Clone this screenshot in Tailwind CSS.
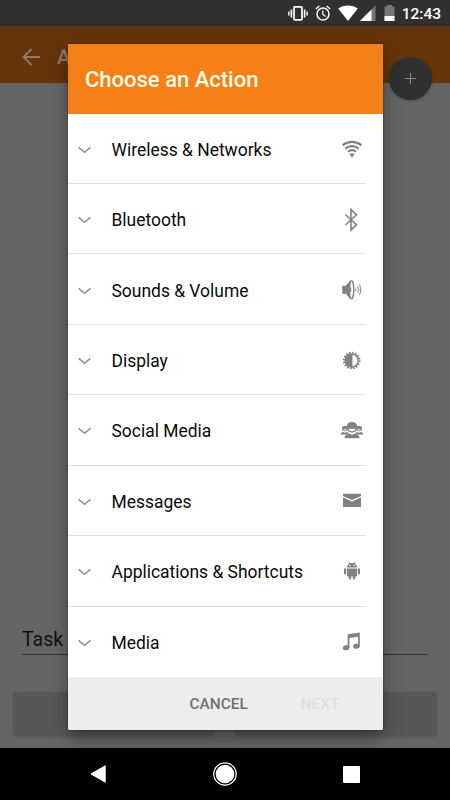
<!DOCTYPE html>
<html lang="en">

<head>
    <meta charset="UTF-8">
    <meta name="viewport" content="width=device-width, initial-scale=1.0">
    <title>Choose an Action</title>
    <script src="https://cdn.jsdelivr.net/npm/@tailwindcss/browser@4"></script>
</head>

<body class="bg-black font-[Roboto,sans-serif]">
    <div class="relative w-[450px] h-[800px] flex flex-col overflow-hidden bg-[#656565]">

        <!-- Status bar -->
        <header class="h-[26px] shrink-0 bg-[#303030] flex items-center justify-end pr-[9px] text-white">
            <svg class="w-5 h-[18px] mr-[7px]" viewBox="0 0 20 18" fill="none" stroke="white">
                <rect x="6" y="2.8" width="8" height="13" rx="1" stroke-width="1.7" />
                <path d="M3.4 5.500v8M16.6 5.500v8" stroke-width="1.6" />
                <path d="M.9 7.500v4M19.1 7.500v4" stroke-width="1.4" />
            </svg>
            <svg class="w-4 h-[18px] mr-[7px]" viewBox="0 0 16 18" fill="none" stroke="white">
                <circle cx="8" cy="10" r="6" stroke-width="1.500" />
                <path d="M.8 5 4.300 2M15.200 5 11.700 2" stroke-width="1.500" />
                <path d="M7.800 6.500v4l3 1.900" stroke-width="1.200" />
            </svg>
            <svg class="w-[20px] h-[18px] mr-[2px]" viewBox="0 0 20 18" fill="white">
                <path d="M.2 4.500C5.500.6 14.500.6 19.800 4.500L10 17z" />
            </svg>
            <svg class="w-4 h-[18px] mr-[8px]" viewBox="0 0 16 18">
                <path d="M0 17 15.500 1.500V17z" fill="#777" />
                <path d="M0 17 11.500 5.500V17z" fill="white" />
            </svg>
            <svg class="w-[11px] h-[18px] mr-[7px]" viewBox="0 0 11 18">
                <path d="M.5 2.500H3V1h5v1.500h2.500V17H.5z" fill="#777" />
                <path d="M.5 12h10v5H.5z" fill="white" />
            </svg>
            <span class="text-[15.500px] leading-none font-medium pt-[3px]">12:43</span>
        </header>

        <!-- App bar -->
        <div class="h-[57px] shrink-0 bg-[#66340a] flex items-center pl-[22px] pt-[4px] text-[#8f7a68]">
            <svg class="w-[19px] h-[18px]" viewBox="0 0 19 18" fill="none" stroke="currentColor" stroke-width="1.8">
                <path d="M18 9H2M9.500 1 1.500 9l8 8" />
            </svg>
            <span class="ml-4 text-[20px] font-medium">A</span>
        </div>

        <!-- Dimmed form -->
        <main class="grow flex flex-col justify-end px-[13px] pb-3">
            <div class="mx-[9px] mb-[37px] h-[30px] border-b border-[#333] text-[19.500px] leading-[30px] text-[#111]">Task</div>
            <div class="flex justify-between">
                <div class="w-[201px] h-[44px] rounded-sm bg-[#575757] shadow-sm"></div>
                <div class="w-[202px] h-[44px] rounded-sm bg-[#575757] shadow-sm"></div>
            </div>
        </main>

        <div class="absolute left-[389px] top-[57px] size-[43px] rounded-full bg-[#303030] shadow-sm shadow-black/20 flex items-center justify-center">
            <svg class="size-[11px]" viewBox="0 0 11 11" stroke="#858585" stroke-width="1.1">
                <path d="M5.500 0v11M0 5.500h11" />
            </svg>
        </div>

        <!-- Navigation bar -->
        <nav class="h-[52px] shrink-0 bg-black flex items-center justify-center gap-[107px]">
            <svg class="w-4 h-[18px]" viewBox="0 0 16 18" fill="white" stroke="white" stroke-linejoin="round">
                <path d="M1 9 15.200.8v16.400z" />
            </svg>
            <svg class="size-6" viewBox="0 0 24 24">
                <circle cx="12" cy="12" r="11.200" fill="none" stroke="white" stroke-width="1.200" />
                <circle cx="12" cy="12" r="9.300" fill="white" />
            </svg>
            <div class="size-[17px] -ml-px rounded-[1px] bg-white"></div>
        </nav>

        <!-- Dialog -->
        <section class="absolute left-[67.5px] top-[44px] w-[315px] h-[685.5px] rounded-xs overflow-hidden bg-white flex flex-col shadow-[0_8px_18px_0_rgba(0,0,0,0.35),0_0_2px_rgba(0,0,0,0.5)]">
            <h1 class="h-[69.5px] shrink-0 bg-[#f58017] pl-[17.500px] pt-[2px] flex items-center text-[22px] font-medium text-[#fffbe8]">Choose an Action</h1>

            <ul class="grow flex flex-col text-[17.450px] text-[#0a0a0a]">
                <li class="flex-1 mr-[17px] border-b border-[#e2e2e2] flex items-center pl-[10px] pt-[3px]">
                    <svg class="w-[13px] h-2 mr-[21px] text-[#929292]" viewBox="0 0 13 8" fill="none" stroke="currentColor" stroke-width="1.6"><path d="M.6 1.300 6.500 6.300l5.900-5" /></svg>
                    <span class="grow">Wireless &amp; Networks</span>
                    <svg class="size-6 mr-[2px] -mt-px" viewBox="0 0 24 24" fill="none" stroke="#818181" stroke-width="2.2">
                        <path d="M2.600 8.300C8.200 3.700 15.800 3.700 21.400 8.300M5.300 11.600c4-3.300 9.400-3.300 13.400 0M8 14.700c2.500-1.900 5.500-1.900 8 0" />
                        <path d="M9.300 17.300q2.700-1.900 5.400 0L12 20.500z" fill="#818181" stroke="none" />
                    </svg>
                </li>
                <li class="flex-1 mr-[17px] border-b border-[#e2e2e2] flex items-center pl-[10px] pt-[3px]">
                    <svg class="w-[13px] h-2 mr-[21px] text-[#929292]" viewBox="0 0 13 8" fill="none" stroke="currentColor" stroke-width="1.6"><path d="M.6 1.300 6.500 6.300l5.900-5" /></svg>
                    <span class="grow">Bluetooth</span>
                    <svg class="size-6 mr-[2px] -mt-px" viewBox="0 0 24 24" fill="none" stroke="#818181" stroke-width="1.6">
                        <path d="M5.300 6.500 16.500 16.700 11 22V1.500l5.500 5.300L5.300 17" />
                    </svg>
                </li>
                <li class="flex-1 mr-[17px] border-b border-[#e2e2e2] flex items-center pl-[10px] pt-[3px]">
                    <svg class="w-[13px] h-2 mr-[21px] text-[#929292]" viewBox="0 0 13 8" fill="none" stroke="currentColor" stroke-width="1.6"><path d="M.6 1.300 6.500 6.300l5.900-5" /></svg>
                    <span class="grow">Sounds &amp; Volume</span>
                    <svg class="size-6 mr-[2px] -mt-px" viewBox="0 0 24 24" fill="none" stroke="#818181">
                        <path d="M2.800 8.200H6L10.500 3Q7.800 12 10.500 20.500L6 15.300H2.800z" fill="#818181" />
                        <ellipse cx="11.300" cy="11.800" rx="2.500" ry="9.100" stroke-width="1.300" />
                        <path d="M10.300 9.500q1.300 2.300 0 4.600z" fill="#818181" />
                        <path d="M15.500 10.300q.9 1.500 0 3M17.700 8.500q1.900 3.300 0 6.600M19.600 6.500q2.600 5.300 0 10.600" stroke-width="1" />
                    </svg>
                </li>
                <li class="flex-1 mr-[17px] border-b border-[#e2e2e2] flex items-center pl-[10px] pt-[3px]">
                    <svg class="w-[13px] h-2 mr-[21px] text-[#929292]" viewBox="0 0 13 8" fill="none" stroke="currentColor" stroke-width="1.6"><path d="M.6 1.300 6.500 6.300l5.900-5" /></svg>
                    <span class="grow">Display</span>
                    <svg class="size-6 mr-[2px] -mt-px" viewBox="0 0 24 24" fill="none" stroke="#818181">
                        <circle cx="11.700" cy="11.500" r="7.900" stroke-width="1.900" stroke-dasharray="1.700 1.402" />
                        <circle cx="11.700" cy="11.500" r="6.500" stroke-width="1.500" />
                        <path d="M12 5.500a6 6 0 0 0 0 12z" fill="#818181" />
                    </svg>
                </li>
                <li class="flex-1 mr-[17px] border-b border-[#e2e2e2] flex items-center pl-[10px] pt-[3px]">
                    <svg class="w-[13px] h-2 mr-[21px] text-[#929292]" viewBox="0 0 13 8" fill="none" stroke="currentColor" stroke-width="1.6"><path d="M.6 1.300 6.500 6.300l5.900-5" /></svg>
                    <span class="grow">Social Media</span>
                    <svg class="size-6 mr-[2px] -mt-px" viewBox="0 0 24 24" fill="#818181">
                        <circle cx="4.800" cy="9.500" r="2.800" />
                        <circle cx="19.200" cy="9.500" r="2.800" />
                        <path d="M3.300 9.900q1.500.6 3 0-.4 1.500-1.500 1.500t-1.500-1.500zM17.700 9.900q1.500.6 3 0-.4 1.500-1.500 1.500t-1.500-1.500z" fill="white" />
                        <path d="M.4 15.500q.4-2.300 3-2.500l1.500.8 2.200-.8 1.300 1-2 1.500zM23.600 15.500q-.4-2.300-3-2.500l-1.500.8-2.200-.8-1.300 1 2 1.500z" />
                        <path d="M12 3c3.700 0 5.600 2.500 5.300 5.200-.3 2.900-2.500 5.300-5.300 5.300s-5-2.400-5.300-5.300C6.400 5.500 8.300 3 12 3z" />
                        <path d="M8.500 9.300q3.500 1.200 7 0-.8 3-3.500 3t-3.500-3z" fill="white" />
                        <path d="M4.500 19.300q.2-4.200 4.300-4.700L12 15.700l3.200-1.100q4.100.5 4.300 4.700z" />
                    </svg>
                </li>
                <li class="flex-1 mr-[17px] border-b border-[#e2e2e2] flex items-center pl-[10px] pt-[3px]">
                    <svg class="w-[13px] h-2 mr-[21px] text-[#929292]" viewBox="0 0 13 8" fill="none" stroke="currentColor" stroke-width="1.6"><path d="M.6 1.300 6.500 6.300l5.900-5" /></svg>
                    <span class="grow">Messages</span>
                    <svg class="size-6 mr-[2px] -mt-px" viewBox="0 0 24 24" fill="#818181">
                        <path d="M3 4.700h18v2.200l-9 4.200-9-4.200z" />
                        <path d="M3 8.200l9 4.300 9-4.300v9.900H3z" />
                    </svg>
                </li>
                <li class="flex-1 mr-[17px] border-b border-[#e2e2e2] flex items-center pl-[10px] pt-[3px]">
                    <svg class="w-[13px] h-2 mr-[21px] text-[#929292]" viewBox="0 0 13 8" fill="none" stroke="currentColor" stroke-width="1.6"><path d="M.6 1.300 6.500 6.300l5.900-5" /></svg>
                    <span class="grow">Applications &amp; Shortcuts</span>
                    <svg class="size-6 mr-[2px] -mt-px" viewBox="0 0 24 24" fill="#818181">
                        <path d="M7 7.500q.3-4.500 5-4.500t5 4.500z" />
                        <path d="M8.500 2l1.500 2.300M15.500 2 14 4.300" stroke="#818181" stroke-width=".8" />
                        <circle cx="9.800" cy="5.500" r=".8" fill="white" />
                        <circle cx="14.200" cy="5.500" r=".8" fill="white" />
                        <path d="M7 8.400h10v7.100q0 1-1 1H8q-1 0-1-1z" />
                        <rect x="4" y="8.200" width="2.200" height="6.500" rx="1.100" />
                        <rect x="17.800" y="8.200" width="2.200" height="6.500" rx="1.100" />
                        <rect x="8.800" y="13" width="2.300" height="6.500" rx="1.100" />
                        <rect x="12.900" y="13" width="2.300" height="6.500" rx="1.100" />
                    </svg>
                </li>
                <li class="flex-1 mr-[17px] border-b border-transparent flex items-center pl-[10px] pt-[3px]">
                    <svg class="w-[13px] h-2 mr-[21px] text-[#929292]" viewBox="0 0 13 8" fill="none" stroke="currentColor" stroke-width="1.6"><path d="M.6 1.300 6.500 6.300l5.900-5" /></svg>
                    <span class="grow">Media</span>
                    <svg class="size-6 mr-[2px] -mt-px" viewBox="0 0 24 24" fill="#818181">
                        <path d="M7.700 4.200 19.800 2.400v13.400H18V6.800L9.500 8v9.800H7.700z" />
                        <ellipse cx="6.200" cy="17.700" rx="3.300" ry="2.500" transform="rotate(-12 6.200 17.700)" />
                        <ellipse cx="16.500" cy="16.200" rx="3.300" ry="2.500" transform="rotate(-12 16.500 16.200)" />
                    </svg>
                </li>
            </ul>

            <footer class="h-[52.500px] shrink-0 bg-[#ededed] flex items-center text-[15.400px] font-medium pt-[2px]">
                <button class="ml-[122px] text-[#717171]">CANCEL</button>
                <button class="ml-[53px] text-[#dfdfdf]">NEXT</button>
            </footer>
        </section>
    </div>
</body>

</html>
